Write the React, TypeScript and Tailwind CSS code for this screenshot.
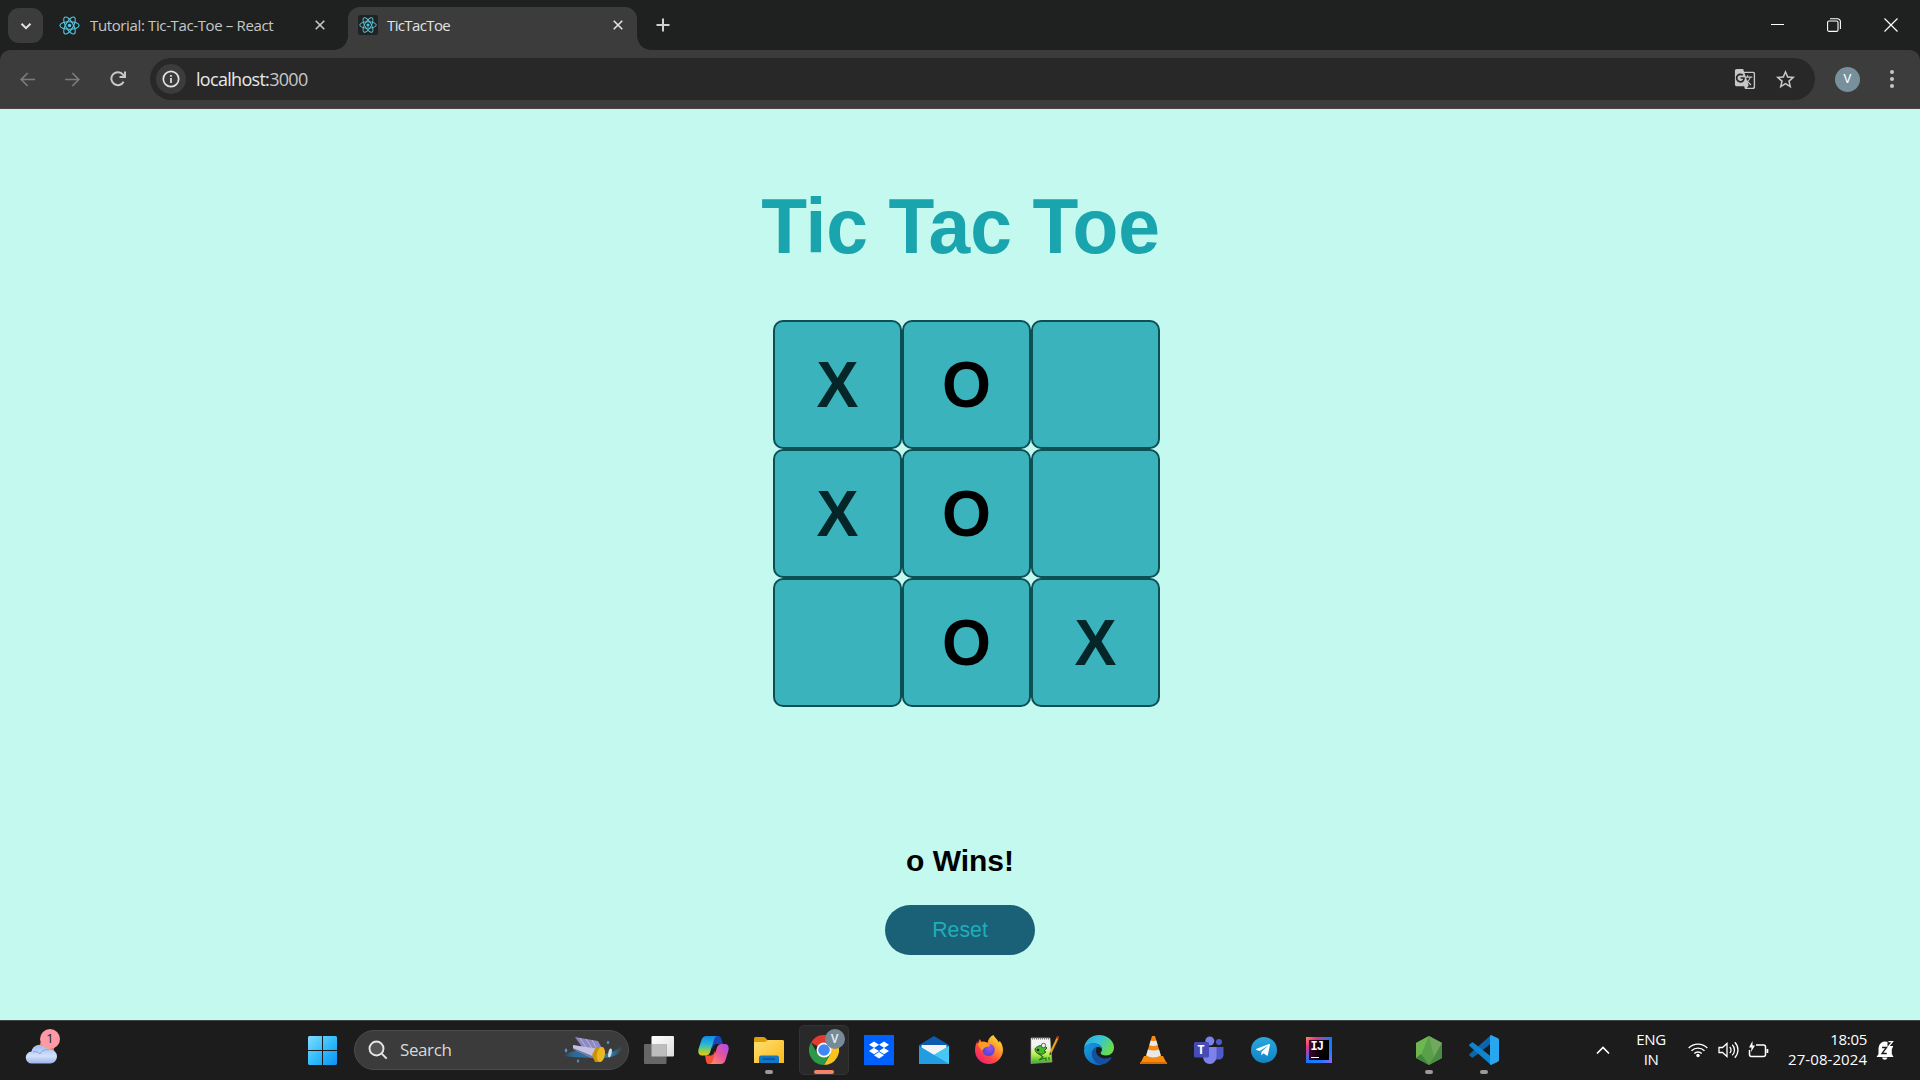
import React from "react";
import { MdGTranslate, MdStarOutline } from "react-icons/md";
import { FaDropbox, FaTelegramPlane } from "react-icons/fa";

const UI = "font-['Open_Sans','Noto_Sans',sans-serif]";

function ReactLogo({ size, className }: { size: number; className?: string }) {
  return (
    <svg width={size} height={size} viewBox="-12 -12 24 24" fill="none" stroke="#58c4dc" strokeWidth="1.25" className={className}>
      <circle r="2" fill="#58c4dc" stroke="none" />
      <ellipse rx="11" ry="4.3" />
      <ellipse rx="11" ry="4.3" transform="rotate(60)" />
      <ellipse rx="11" ry="4.3" transform="rotate(120)" />
    </svg>
  );
}

function Cross({ color }: { color: string }) {
  return (
    <svg width="10" height="10" viewBox="0 0 10 10" stroke={color} strokeWidth="1.6" className="shrink-0">
      <path d="M.7.7l8.6 8.6M9.3.7L.7 9.3" />
    </svg>
  );
}

function TabStrip() {
  return (
    <div className="flex h-[50px] bg-[#1f2120] pl-2">
      <div className="mt-2 flex h-[35px] w-[35px] items-center justify-center rounded-[11px] bg-[#3c3c3c]">
        <svg width="12" height="12" viewBox="0 0 12 12" fill="none" stroke="#e3e3e3" strokeWidth="2"><path d="M1.500 3.700L6 8.200l4.500-4.500" /></svg>
      </div>
      <div className="flex w-[305px] items-center pl-4">
        <ReactLogo size={21} />
        <div className={`ml-[10px] w-[225px] whitespace-nowrap text-[15px] tracking-[-0.37px] text-[#c7c7c7] ${UI}`}>Tutorial: Tic-Tac-Toe – React</div>
        <Cross color="#c7c7c7" />
      </div>
      <div className="relative mt-[7px] flex h-[43px] w-[289px] items-center rounded-t-[12px] bg-[#3c3c3c] pb-[7px] pl-[10px]">
        <span className="absolute bottom-0 left-[-14px] h-[14px] w-[14px] bg-[radial-gradient(circle_at_top_left,transparent_13.500px,#3c3c3c_14.200px)]" />
        <span className="absolute bottom-0 right-[-14px] h-[14px] w-[14px] bg-[radial-gradient(circle_at_top_right,transparent_13.500px,#3c3c3c_14.200px)]" />
        <div className="flex h-5 w-5 items-center justify-center rounded-[2px] bg-[#212322]"><ReactLogo size={18} /></div>
        <div className={`ml-[9px] w-[226px] text-[15px] tracking-[-0.62px] text-[#e3e3e3] ${UI}`}>TicTacToe</div>
        <Cross color="#e3e3e3" />
      </div>
      <svg width="14" height="14" viewBox="0 0 14 14" stroke="#d0d0d0" strokeWidth="2" className="ml-[19px] mt-[18px]"><path d="M7 .5v13M.5 7h13" /></svg>
      <div className="ml-auto flex h-[49px] items-center pr-[22px]">
        <svg width="13" height="13" viewBox="0 0 13 13"><path d="M0 6h13v1H0z" fill="#fff" /></svg>
        <svg width="14" height="14" viewBox="0 0 14 14" fill="none" stroke="#fff" strokeWidth="1.1" className="ml-[43px]">
          <rect x=".6" y="3" width="10.400" height="10.400" rx="1.500" />
          <path d="M3 .7h7.500a2.900 2.900 0 0 1 2.900 2.900v7.500" />
        </svg>
        <svg width="14" height="14" viewBox="0 0 14 14" stroke="#fff" strokeWidth="1.2" className="ml-[43px]"><path d="M.5.5l13 13M13.500.5l-13 13" /></svg>
      </div>
    </div>
  );
}

function Toolbar() {
  return (
    <div className="h-[59px] bg-[#1f2120]">
      <div className="flex h-[59px] items-center rounded-t-[10px] border-b border-[#4a4444] bg-[#3c3c3c] pl-5">
        <svg width="15" height="15" viewBox="0 0 15 15" fill="none" stroke="#7b7b7b" strokeWidth="1.7"><path d="M15 7.500H1.500M7.700 1L1.200 7.500l6.500 6.500" /></svg>
        <svg width="15" height="15" viewBox="0 0 15 15" fill="none" stroke="#7b7b7b" strokeWidth="1.7" className="ml-[30px]"><path d="M0 7.500h13.500M7.300 1l6.500 6.500-6.500 6.500" /></svg>
        <svg width="16" height="16" viewBox="0 0 16 16" fill="none" stroke="#c7c7c7" strokeWidth="2" className="ml-[30px]">
          <path d="M13.600 10.700A6.500 6.500 0 1 1 13 3.700l1.500 1.800" /><path d="M15 .5V6H9.500" />
        </svg>
        <div className="ml-[24px] flex h-[42px] w-[1665px] items-center rounded-full bg-[#282828] pl-1.5">
          <div className="flex h-[30px] w-[30px] items-center justify-center rounded-full bg-[#3c3c3c]">
            <svg width="18" height="18" viewBox="0 0 18 18" fill="none" stroke="#e3e3e3" strokeWidth="1.700"><circle cx="9" cy="9" r="7.700" /><path d="M9 8v5M9 5v1.800" /></svg>
          </div>
          <div className={`ml-[10px] text-[18px] tracking-[-0.7px] text-[#e8e8e8] ${UI}`}>localhost:<span className="text-[#c7c7c7]">3000</span></div>
          <div className="ml-auto flex items-center pr-[18px] text-[#c7c7c7]">
            <MdGTranslate size={22} />
            <MdStarOutline size={23} className="ml-[18px]" />
          </div>
        </div>
        <div className="ml-5 flex h-[25px] w-[25px] items-center justify-center rounded-full bg-[#78909c] font-['Roboto',sans-serif] text-[13px] text-white">V</div>
        <svg width="4" height="20" viewBox="0 0 4 20" fill="#c7c7c7" className="ml-[30px]"><circle cx="2" cy="3" r="2" /><circle cx="2" cy="10" r="2" /><circle cx="2" cy="17" r="2" /></svg>
      </div>
    </div>
  );
}

const board = ["X", "O", "", "X", "O", "", "", "O", "X"];

function Game() {
  return (
    <main className="flex h-[911px] flex-col items-center bg-[#c4f9f0] font-['Liberation_Sans',Arial,sans-serif]">
      <h1 className="mt-[74px] h-[86px] scale-y-[1.04] whitespace-nowrap pl-px text-[75px] font-bold leading-[86px] tracking-[-0.15px] text-[#1aa5ae]">Tic Tac Toe</h1>
      <div className="ml-[13px] mt-[51px] grid grid-cols-[repeat(3,129px)] grid-rows-[repeat(3,129px)]">
        {board.map((v, i) => (
          <div key={i} className={`flex items-center justify-center rounded-[10px] border-2 border-[#0c4f55] bg-[#3bb3bd] text-[63px] font-bold ${v === "X" ? "text-[#042628]" : "text-black"}`}>
            <span className="scale-y-[1.04]">{v}</span>
          </div>
        ))}
      </div>
      <p className="mt-[136px] h-9 text-[30px] font-bold leading-9 text-black">o Wins!</p>
      <button className="mt-[26px] h-[50px] w-[150px] rounded-full bg-[#1a6177] pt-px text-[21.300px] text-[#1fadb9]">Reset</button>
    </main>
  );
}

function Slot({ children, mark }: { children?: React.ReactNode; mark?: "dot" | "active" }) {
  return (
    <div className="relative flex h-[59px] w-[55px] items-center justify-center">
      {mark === "active" && <span className="absolute left-[3px] top-[4px] h-[50px] w-[50px] rounded-[5px] border border-[#333] bg-[#292929]" />}
      <span className="relative">{children}</span>
      {mark === "dot" && <span className="absolute bottom-[6px] left-[23.500px] h-1 w-2 rounded-full bg-[#9a9a9a]" />}
      {mark === "active" && <span className="absolute bottom-[6px] left-[18px] h-1 w-5 rounded-full bg-[#f4836b]" />}
    </div>
  );
}

const TaskView = () => (
  <svg width="30" height="28" viewBox="0 0 30 28">
    <defs><linearGradient id="tv" x2="1" y2="1"><stop stopColor="#fff" /><stop offset="1" stopColor="#ddd" /></linearGradient></defs>
    <rect x="7.500" y="0" width="22.500" height="20.500" rx="1" fill="url(#tv)" />
    <rect x="0" y="8" width="22.500" height="20" rx="1" fill="#666" />
    <rect x="7.500" y="8" width="15" height="12.500" fill="#bdbdbd" />
  </svg>
);

const Copilot = () => (
  <svg width="31" height="28" viewBox="0 0 31 28">
    <defs>
      <linearGradient id="cpa" x2="0" y2="1"><stop stopColor="#1588df" /><stop offset=".4" stopColor="#20b5e0" /><stop offset=".75" stopColor="#8bce52" /><stop offset="1" stopColor="#f2c811" /></linearGradient>
      <linearGradient id="cpb" x1="1" x2="0" y2="1"><stop stopColor="#a24ff0" /><stop offset=".5" stopColor="#e8559a" /><stop offset="1" stopColor="#ff9a55" /></linearGradient>
    </defs>
    <path d="M14 0h6c2.500 0 3 1.500 3.500 3.500L25 8h-6c-3 0-4 2-5 5z" fill="#1747b8" />
    <path d="M17 28h-6c-2.500 0-2.500-1.500-3.200-4L7 19.500h5c3 0 4-2 5-5z" fill="#f5513a" />
    <path d="M8.500 0H20c-3 0-3.600 2.500-4.500 5.500l-3 9.500c-.9 3-2 4.500-5.500 4.500H4C.5 19.500-.3 16 .7 12.500l2.600-8C4.200 1.500 5.500 0 8.500 0z" fill="url(#cpa)" />
    <path d="M22.500 28H11c3 0 3.600-2.500 4.500-5.500l3-9.500c.9-3 2-5 5.500-5H27c3.500 0 4.300 3.500 3.300 7l-2.600 8.500c-.9 3-2.200 4.500-5.200 4.500z" fill="url(#cpb)" />
  </svg>
);

const Folder = () => (
  <svg width="30" height="28" viewBox="0 0 30 28">
    <defs><linearGradient id="fd" x2="1" y2="1"><stop stopColor="#ffdf75" /><stop offset="1" stopColor="#fbb917" /></linearGradient></defs>
    <path d="M0 2.500Q0 1 1.500 1h8q1 0 2 1l2 2H28q2 0 2 2v6H0z" fill="#dd9f08" />
    <path d="M0 6h11l3-2h14.500Q30 4 30 5.500V27H0z" fill="url(#fd)" />
    <path d="M5 27v-5.500Q5 19.500 7 19.500h16q2 0 2 2V27z" fill="#1276c8" />
    <path d="M9 23h12" stroke="#0a4a84" strokeWidth="1.200" />
  </svg>
);

const Chrome = () => (
  <span className="relative block h-[30px] w-[30px]">
    <svg width="30" height="30" viewBox="0 0 48 48">
      <path d="M24 24L3.200 12A24 24 0 0 1 44.800 12H24z" fill="#e33b2e" />
      <path d="M24 24L44.800 12A24 24 0 0 1 24 48l10.400-18z" fill="#fcc31e" />
      <path d="M3.200 12A24 24 0 0 0 24 48l10.400-18L24 24l-10.400 6z" fill="#2a9a48" />
      <circle cx="24" cy="24" r="12" fill="#fff" /><circle cx="24" cy="24" r="9.300" fill="#4285f4" />
    </svg>
    <span className="absolute left-[16px] top-[-6px] flex h-[20px] w-[20px] items-center justify-center rounded-full bg-[#758c98] font-['Roboto',sans-serif] text-[12px] font-medium text-[#e4eaed]">V</span>
  </span>
);

const Mail = () => (
  <svg width="30" height="28" viewBox="0 0 30 28">
    <path d="M0 9L15 0l15 9v4H0z" fill="#0b5cad" /><path d="M2.500 9h25v4L15 20 2.500 13z" fill="#f4f4f6" />
    <path d="M0 10l15 9 15-9v18H0z" fill="#2ea8e8" /><path d="M30 10v18L15 19z" fill="#45c8f4" /><path d="M0 28V10l30 18z" fill="#239de2" />
  </svg>
);

const Firefox = () => (
  <svg width="30" height="30" viewBox="0 0 30 30">
    <defs>
      <linearGradient id="ff" x1="1" x2=".2" y2="1"><stop stopColor="#fff34a" /><stop offset=".35" stopColor="#ffa72a" /><stop offset=".7" stopColor="#ff4545" /><stop offset="1" stopColor="#ec1c78" /></linearGradient>
      <radialGradient id="ffp" cx=".6" cy=".35"><stop stopColor="#a44ff0" /><stop offset="1" stopColor="#5a48d8" /></radialGradient>
    </defs>
    <path d="M19.500 0c1 2.700 4 4.400 5.500 7.500l.6-1.800c2.400 3 3.600 6.300 3.400 9.800C28.600 23 22.500 29 15 29 7 29 1 23 1 15.300c0-3.800 1-6.700 2.200-8.800L3.500 9l2.300-5 1.700 3c2.500-.4 4.500 0 6 1 .5-3.500 2.600-6.600 6-8z" fill="url(#ff)" />
    <circle cx="14.500" cy="15" r="6.200" fill="url(#ffp)" />
    <path d="M4 9c3-3 7-2.500 9.500-1l3 2c-1.500 2-3.500 1.800-5.500 2.500-1.500.7-1.500 1.800-3 3.500C7 13 4.500 12.500 4 9z" fill="#ff9a24" />
  </svg>
);

const NotepadPP = () => (
  <svg width="30" height="30" viewBox="0 0 30 30">
    <defs><linearGradient id="np" x2="0" y2="1"><stop offset=".3" stopColor="#f4f5f2" /><stop offset=".65" stopColor="#b9ee4d" /><stop offset="1" stopColor="#35a92a" /></linearGradient></defs>
    <path d="M2 3h19l2 24-21 1.500z" fill="url(#np)" stroke="#aaa" strokeWidth=".6" />
    <path d="M3 3.500h18" stroke="#777" strokeWidth="2" strokeDasharray="1 1" />
    <path d="M6 14c2-4 9-5 12-1l-3 3 2 1-3 2c-4 1-8-1-8-5z" fill="#49b92c" stroke="#294d1a" strokeWidth=".9" />
    <circle cx="14.500" cy="10.500" r="2.200" fill="#eee" stroke="#444" strokeWidth=".8" /><circle cx="9" cy="15" r="1.300" fill="#222" />
    <path d="M9 18l5 4-4 3 7-2v3m3-4v3" stroke="#25711a" strokeWidth="1.100" fill="none" />
    <path d="M29 2L21.500 18" stroke="#e6a11a" strokeWidth="2.200" /><path d="M29.300 1.300l-1 2.400" stroke="#b03024" strokeWidth="2.400" /><path d="M21.700 17.500L20.800 20" stroke="#333" strokeWidth="1.200" />
  </svg>
);

const Edge = () => (
  <svg width="30" height="30" viewBox="0 0 30 30">
    <defs>
      <linearGradient id="ea" x2="1" y2=".5"><stop stopColor="#2da8dd" /><stop offset=".5" stopColor="#35c3da" /><stop offset="1" stopColor="#68dd4b" /></linearGradient>
      <linearGradient id="eb" x2="1" y2="1"><stop stopColor="#1b9de2" /><stop offset="1" stopColor="#0c64b8" /></linearGradient>
    </defs>
    <path d="M0 13.500C.8 5.500 7 0 15 0c8.500 0 15 6 15 12.500 0 4.800-3.500 8-8 8-3.500 0-5.300-1.200-5.300-2.500 0-1 1.300-1.300 1.300-3.700C18 11 14.500 8.500 9.500 8.500 5 8.500 1.500 10.500 0 13.500z" fill="url(#ea)" />
    <path d="M0 15.500C0 11 4 8 9 8c5.500 0 9 2.800 9 6-1-1.500-2.500-2-4-2-2.500 0-5 2.700-5 6.700C9 24 13 28 18 29.500c-1 .4-2 .5-3 .5C6.500 30 0 23 0 15.500z" fill="url(#eb)" />
    <path d="M11.500 12.700c-3 1.400-4 4.500-3.600 7C8.700 25.500 13 29.500 18 29.600c4.500-.8 7.500-3.500 9.500-6.600.3-.6-.2-1-.8-.7-2 1-4.200 1.400-6.200 1.200-5.300-.5-8.500-4-8.500-7.700 0-1.200.3-2.200.8-3.200z" fill="#14509e" />
  </svg>
);

const Vlc = () => (
  <svg width="27" height="28" viewBox="0 0 27 28">
    <path d="M4 20h19l4 8H0z" fill="#f58a0b" /><path d="M0 26h27v2H0z" fill="#d86a00" />
    <path d="M12 0h3l6 20q-7.500 4.500-15 0z" fill="#f58a14" />
    <path d="M10.700 4.500q2.800 1 5.600 0l1.400 4.700q-4.200 1.500-8.400 0zM8 13.500q5.500 2 11 0l1.800 6q-7.300 4-14.600 0z" fill="#e9e9e9" />
  </svg>
);

const Teams = () => (
  <span className="relative block h-7 w-[30px]">
    <svg width="30" height="28" viewBox="0 0 30 28">
      <circle cx="25" cy="6" r="3" fill="#5059c9" /><circle cx="15.800" cy="5" r="4.500" fill="#7b83eb" />
      <path d="M19 11h10.500v7.500c0 3-2 5-5 5H19z" fill="#5059c9" /><path d="M9 11h13.500v9.500c0 4.300-3 7.500-6.700 7.500S9 25 9 20.500z" fill="#7b83eb" />
      <rect x="0" y="6" width="15" height="15.500" rx="1.500" fill="#464bb8" />
    </svg>
    <span className="absolute left-0 top-[6px] w-[15px] text-center font-['Open_Sans',sans-serif] text-[12px] font-bold leading-[15px] text-white">T</span>
  </span>
);

const Telegram = () => (
  <span className="flex h-[26px] w-[26px] items-center justify-center rounded-full bg-gradient-to-b from-[#2ba7df] to-[#0f84c4] text-white"><FaTelegramPlane size={16} className="mr-0.5" /></span>
);

const IntelliJ = () => (
  <span className="flex h-[26px] w-[26px] items-center justify-center bg-[linear-gradient(135deg,#ff8a4c_0%,#e2348c_22%,#1478ff_50%,#1a7dff_75%,#a45cf5_100%)]">
    <span className="flex h-[20px] w-[20px] flex-col bg-gradient-to-r from-[#3b0a2c] to-black pl-[2px] pt-px">
      <span className="font-['Liberation_Mono',monospace] text-[12px] font-bold leading-[12px] tracking-[-1px] text-white">IJ</span>
      <span className="mt-[4px] h-px w-[8px] bg-white" />
    </span>
  </span>
);

const NodeHex = () => (
  <svg width="26" height="29" viewBox="0 0 26 29">
    <path d="M13 0l13 7v15l-13 7-13-7V7z" fill="#5a9f4a" /><path d="M13 0L0 7v15l5-3z" fill="#6cb74f" /><path d="M13 0l13 7-8 14z" fill="#70a95c" /><path d="M0 22l5-4 8 11z" fill="#3f873f" /><path d="M26 7v15l-13 7 5-8z" fill="#4b8c43" />
  </svg>
);

const VsCode = () => (
  <svg width="30" height="30" viewBox="0 0 30 30">
    <path d="M22 0v8.500L4.500 22.300q-1 .8-2 0L.5 20.500q-.8-.8 0-1.600z" fill="#0b66ad" />
    <path d="M22 30v-8.500L4.500 7.700q-1-.8-2 0L.5 9.500q-.8.8 0 1.600z" fill="#0f84cf" />
    <path d="M22 0l7 3.300q1 .5 1 1.700v20q0 1.200-1 1.700L22 30q-1-.2-1-1.500v-27Q21 .2 22 0z" fill="#29a6f0" />
  </svg>
);

function Weather() {
  return (
    <div className="relative ml-[25px] h-[59px] w-9">
      <svg width="36" height="59" viewBox="0 0 36 59">
        <defs><linearGradient id="cl" x1="0" x2="0" y1="0" y2="1"><stop stopColor="#9dbbec" /><stop offset=".6" stopColor="#d3e0fa" /><stop offset="1" stopColor="#9ab4ea" /></linearGradient></defs>
        <path d="M15 22h14v10H15z" fill="#ee7a1d" />
        <path d="M7 42.500a6 6 0 0 1-.5-12A8.500 8.500 0 0 1 21 26.500a8 8 0 0 1 4 2 7 7 0 0 1 0 14z" fill="url(#cl)" />
        <path d="M8 31c3-1 5 0 7 2 2-4 6-5 9-4" stroke="#84a3dc" fill="none" />
      </svg>
      <span className={`absolute left-[15px] top-[8px] flex h-5 w-5 items-center justify-center rounded-full bg-[#ff99a4] text-[13px] text-[#222] ${UI}`}>1</span>
    </div>
  );
}

function WindowsLogo() {
  return (
    <svg width="29" height="29" viewBox="0 0 29 29">
      <defs><linearGradient id="wn" x2="1" y2="1" gradientUnits="userSpaceOnUse" x1="0" y1="0" gradientTransform="scale(29)"><stop stopColor="#83dcff" /><stop offset=".5" stopColor="#33bdfb" /><stop offset="1" stopColor="#0b90f5" /></linearGradient></defs>
      <path d="M1 0h13v14H0V1zM15 0h13l1 1v13H15zM0 15h14v14H1l-1-1zM15 15h14v13l-1 1H15z" fill="url(#wn)" />
    </svg>
  );
}

function SearchArt() {
  return (
    <svg width="60" height="28" viewBox="0 0 60 28">
      <defs><linearGradient id="bm" x1="1" x2="0"><stop stopColor="#2d7fb5" stopOpacity="0" /><stop offset=".2" stopColor="#2b79ad" /><stop offset=".8" stopColor="#2b6c98" /><stop offset="1" stopColor="#2d7fb5" stopOpacity="0" /></linearGradient></defs>
      <path d="M0 20q9-6 17-5l21 3q12 0 22-9-2 12-19 13-22 0-41-2z" fill="url(#bm)" />
      <path d="M12 1l23 4 5 9-21-3z" fill="#8d88bf" /><path d="M17 2l6 9m0-8l6 9m0-8l5 9" stroke="#b9b5df" />
      <path d="M10 9l20 3 8 1-3 11-8-3-17-8z" fill="#c5c1e2" /><path d="M10 12l17 7 8 4v1l-8-3-17-8z" fill="#77719f" />
      <path d="M33 11h7l2 6-4 9-6 0-3-7z" fill="#c99308" /><ellipse cx="38" cy="18.500" rx="4" ry="7.500" fill="#eab720" transform="rotate(10 38 18)" />
      <ellipse cx="47" cy="17" rx="1.700" ry="4.500" fill="#c7e0ef" transform="rotate(12 47 17)" />
      <path d="M45 4.500l1.500 2-1.500 2-1.500-2zM3 12l1.500 2.500L3 17l-1.500-2.500zM15 23l1.300 2-1.300 2-1.300-2z" fill="#5b8fd6" />
    </svg>
  );
}

function Tray() {
  return (
    <div className={`flex h-[58px] items-center text-[15px] leading-[20px] text-white ${UI}`}>
      <svg width="14" height="9" viewBox="0 0 14 9" fill="none" stroke="#fff" strokeWidth="1.700"><path d="M1 7.500l6-6 6 6" /></svg>
      <div className="ml-[21px] w-10 pb-[2px] text-center tracking-[-0.4px]">ENG<br />IN</div>
      <svg width="20" height="16" viewBox="0 0 20 16" fill="none" stroke="#fff" strokeWidth="1.400" className="ml-[17px]">
        <path d="M.7 6a13.200 13.200 0 0 1 18.600 0M3.500 8.800a9.200 9.200 0 0 1 13 0M6.300 11.600a5.200 5.200 0 0 1 7.400 0" /><circle cx="10" cy="13.500" r="1.700" fill="#fff" stroke="none" />
      </svg>
      <svg width="21" height="18" viewBox="0 0 21 18" fill="none" stroke="#fff" strokeWidth="1.300" className="ml-[10px]">
        <path d="M1 6.500h3.500L9 2.500v13l-4.500-4H1z" /><path d="M11.700 6a4 4 0 0 1 0 6M14.300 3.700a7.500 7.500 0 0 1 0 10.600M16.800 1.300a11 11 0 0 1 0 15.400" />
      </svg>
      <svg width="21" height="18" viewBox="0 0 21 18" fill="none" stroke="#fff" strokeWidth="1.500" className="ml-[9px]">
        <path d="M8 4h7.500Q17.500 4 17.500 6v7.500q0 2-2 2h-12q-2 0-2-2V9" /><path d="M18.500 8h1.800v4h-1.800z" fill="#fff" stroke="none" /><path d="M4.500 0L1 6.500h2.500L3 11l4-6.500H4.500z" fill="#fff" stroke="none" />
      </svg>
      <div className="ml-[19px] w-[79px] pb-[3px]">
        <div className="text-right tracking-[-0.3px]">18:05</div>
        <div className="whitespace-nowrap text-right tracking-[0.08px]">27-08-2024</div>
      </div>
      <svg width="19" height="20" viewBox="0 0 19 20" className="ml-[9px] mr-[25px]">
        <path d="M2.500 14V8a6.500 6.500 0 0 1 8-6.300h6V8l-.7 1v5l1.700 3H.5z" fill="#fff" /><path d="M6 17.500h5.500q-.5 2.300-2.700 2.300T6 17.500z" fill="#fff" />
        <path d="M6 7.500h4.500L6 13.500h4.800" stroke="#1c1c1c" strokeWidth="1.400" fill="none" /><path d="M11.500.5h7V6l-3.500 1h-3.500z" fill="#1c1c1c" /><path d="M12.500 1.700h4l-4 5h4.500" stroke="#fff" strokeWidth="1.300" fill="none" />
      </svg>
    </div>
  );
}

function Taskbar() {
  return (
    <footer className="flex h-[60px] border-t border-[#434343] bg-[#1c1c1c]">
      <Weather />
      <div className="ml-[247px] flex h-[58px] items-center">
        <WindowsLogo />
        <div className="ml-[17px] flex h-10 w-[275px] items-center rounded-full border border-[#4b4b4b] bg-[#3b3b3b] pl-[13px]">
          <svg width="20" height="20" viewBox="0 0 20 20" fill="#555" stroke="#e6e6e6" strokeWidth="1.900"><circle cx="8.500" cy="8.500" r="7" /><path d="M13.700 13.700l5 5" /></svg>
          <span className={`ml-[12px] text-[17px] tracking-[-0.4px] text-[#d8d8d8] ${UI}`}>Search</span>
          <span className="ml-auto pr-[5px]"><SearchArt /></span>
        </div>
        <div className="ml-[2px] flex">
          <Slot><TaskView /></Slot>
          <Slot><Copilot /></Slot>
          <Slot mark="dot"><Folder /></Slot>
          <Slot mark="active"><Chrome /></Slot>
          <Slot><span className="flex h-[30px] w-[30px] items-center justify-center bg-[#0061fe] text-white"><FaDropbox size={20} /></span></Slot>
          <Slot><Mail /></Slot>
          <Slot><Firefox /></Slot>
          <Slot><NotepadPP /></Slot>
          <Slot><Edge /></Slot>
          <Slot><Vlc /></Slot>
          <Slot><Teams /></Slot>
          <Slot><Telegram /></Slot>
          <Slot><IntelliJ /></Slot>
          <Slot />
          <Slot mark="dot"><NodeHex /></Slot>
          <Slot mark="dot"><VsCode /></Slot>
        </div>
      </div>
      <div className="ml-auto"><Tray /></div>
    </footer>
  );
}

export default function App() {
  return (
    <div className="h-[1080px] w-[1920px] overflow-hidden">
      <TabStrip />
      <Toolbar />
      <Game />
      <Taskbar />
    </div>
  );
}
